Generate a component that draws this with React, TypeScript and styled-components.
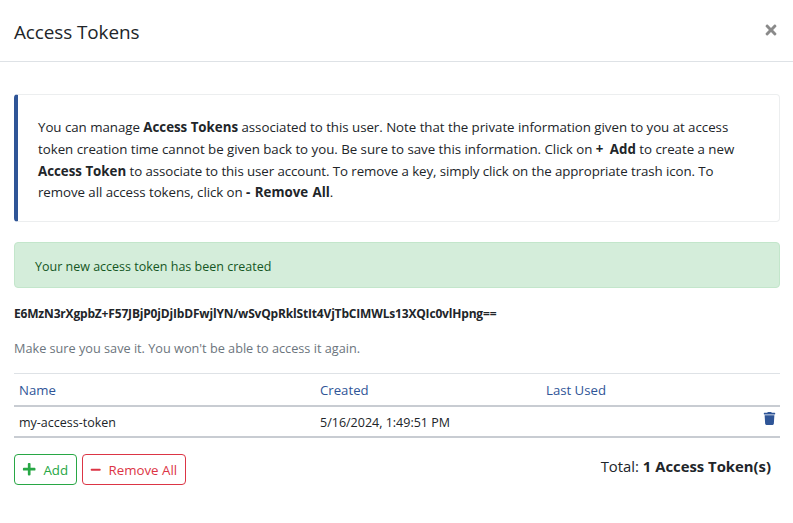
import React from "react";
import styled, { createGlobalStyle } from "styled-components";
import { FaTimes, FaPlus, FaMinus, FaTrash } from "react-icons/fa";

const Global = createGlobalStyle`
  html, body { margin: 0; padding: 0; background: #fff; }
  body { font-family: "Open Sans", "Noto Sans", sans-serif; color: #212529; }
`;

const Modal = styled.div`
  width: 793px;
  height: 523px;
  overflow: hidden;
  display: flex;
  flex-direction: column;
`;
const Header = styled.header`
  height: 61px;
  border-bottom: 1px solid #dee2e6;
  display: flex;
  align-items: center;
  justify-content: space-between;
  padding: 0 14px;
`;
const Title = styled.h5`
  margin: 2px 0 0;
  font-size: 18.9px;
  font-weight: 400;
  letter-spacing: -0.08px;
  color: #212529;
`;
const Close = styled.button`
  border: 0;
  background: none;
  padding: 0;
  width: 16px;
  height: 16px;
  color: #8a8a8a;
  display: flex;
  margin-top: -2px;
`;
const Body = styled.main`
  padding: 32px 13px 0 14px;
  display: flex;
  flex-direction: column;
`;
const Callout = styled.section`
  height: 128px;
  box-sizing: border-box;
  border: 1px solid #eceeef;
  border-left: 4px solid #2f5597;
  border-radius: 4px;
  padding: 22px 20px 0;
  font-size: 13.3px;
  line-height: 21.8px;
  color: #212529;
  white-space: nowrap;
`;
const Line = styled.div<{ $ls: number }>`
  letter-spacing: ${(p) => p.$ls}px;
`;
const Strong = styled.b`
  letter-spacing: 0;
`;
const Command = styled.b<{ $ws: number }>`
  letter-spacing: 0;
  word-spacing: ${(p) => p.$ws}px;
`;
const Success = styled.div`
  margin-top: 20px;
  height: 46px;
  box-sizing: border-box;
  background: #d4edda;
  border: 1px solid #c3e6cb;
  border-radius: 4px;
  padding: 2px 20px 0;
  display: flex;
  align-items: center;
  font-size: 12.5px;
  color: #155724;
`;
const Token = styled.div`
  margin-top: 18px;
  font-size: 12px;
  line-height: 16px;
  font-weight: 700;
  letter-spacing: -0.176px;
  color: #212529;
`;
const Hint = styled.p`
  margin: 18px 0 0;
  font-size: 12.7px;
  line-height: 16px;
  color: #6c757d;
`;
const Table = styled.div`
  margin-top: 17px;
  border-top: 1px solid #dee2e6;
  border-bottom: 2px solid #c8ccd2;
`;
const Row = styled.div`
  display: grid;
  grid-template-columns: 301px 226px 1fr 20px;
  padding-left: 5px;
  align-items: center;
`;
const HeadRow = styled(Row)`
  height: 31px;
  border-bottom: 2px solid #c8ccd2;
  font-size: 13.2px;
  font-weight: 500;
  color: #2f5597;
`;
const DataRow = styled(Row)`
  height: 29px;
  box-sizing: border-box;
  padding-top: 1px;
  font-size: 12.5px;
  color: #212529;
`;
const Trash = styled.span`
  color: #2f5597;
  display: flex;
  justify-self: end;
  align-self: start;
  margin: 4px 4px 0 0;
`;
const Footer = styled.footer`
  margin-top: 16px;
  display: flex;
  align-items: center;
  gap: 5px;
`;
const Btn = styled.button<{ $c: string; $pl: number; $pr: number }>`
  height: 31px;
  box-sizing: border-box;
  background: #fff;
  border: 1px solid ${(p) => p.$c};
  border-radius: 4px;
  color: ${(p) => p.$c};
  font-family: inherit;
  font-size: 13.3px;
  padding: 0 ${(p) => p.$pr}px 0 ${(p) => p.$pl}px;
  display: flex;
  align-items: center;
  gap: 7px;
`;
const Total = styled.div`
  margin: 0 9px 8px auto;
  font-size: 14.85px;
  color: #212529;
`;

export default function App() {
  return (
    <Modal>
      <Global />
      <Header>
        <Title>Access Tokens</Title>
        <Close aria-label="Close"><FaTimes size={16} /></Close>
      </Header>
      <Body>
        <Callout>
          <Line $ls={-0.035}>You can manage <Strong>Access Tokens</Strong> associated to this user. Note that the private information given to you at access</Line>
          <Line $ls={-0.025}>token creation time cannot be given back to you. Be sure to save this information. Click on <Command $ws={3}>+ Add</Command> to create a new</Line>
          <Line $ls={-0.085}><Strong>Access Token</Strong> to associate to this user account. To remove a key, simply click on the appropriate trash icon. To</Line>
          <Line $ls={-0.06}>remove all access tokens, click on <Command $ws={1}>- Remove All</Command>.</Line>
        </Callout>
        <Success>Your new access token has been created</Success>
        <Token>E6MzN3rXgpbZ+F57JBjP0jDjIbDFwjlYN/wSvQpRklStIt4VjTbCIMWLs13XQIc0vlHpng==</Token>
        <Hint>Make sure you save it. You won't be able to access it again.</Hint>
        <Table>
          <HeadRow><span>Name</span><span>Created</span><span>Last Used</span><span /></HeadRow>
          <DataRow>
            <span>my-access-token</span>
            <span>5/16/2024, 1:49:51 PM</span>
            <span />
            <Trash><FaTrash size={13} /></Trash>
          </DataRow>
        </Table>
        <Footer>
          <Btn $c="#28a745" $pl={7} $pr={8}><FaPlus size={14.4} />Add</Btn>
          <Btn $c="#dc3545" $pl={7} $pr={8}><FaMinus size={11.4} />Remove All</Btn>
          <Total>Total: <b>1 Access Token(s)</b></Total>
        </Footer>
      </Body>
    </Modal>
  );
}
